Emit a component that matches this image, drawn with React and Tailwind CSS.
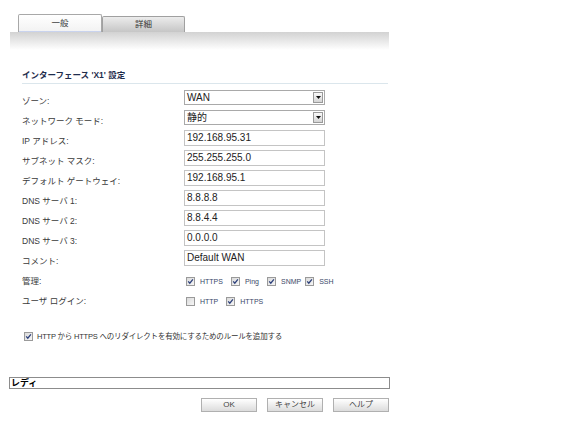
import React from 'react';

const FONT = "font-['Liberation_Sans','Noto_Sans_CJK_JP',sans-serif]";

const Check = ({ checked }) => (
  <svg width="9" height="9" viewBox="0 0 9 9" className="shrink-0">
    <defs>
      <linearGradient id="cbg" x1="0" y1="0" x2="1" y2="1">
        <stop offset="0" stopColor="#d8d8d8" />
        <stop offset="1" stopColor="#f8f8f8" />
      </linearGradient>
    </defs>
    <rect x="0.5" y="0.5" width="8" height="8" fill="url(#cbg)" stroke="#9a9a9a" />
    {checked && <path d="M2.2 4.4 L3.8 6.2 L6.9 2.4" fill="none" stroke="#2c3f7a" strokeWidth="1.3" />}
  </svg>
);

const SelectBox = ({ value }) => (
  <div className="w-[141px] h-[15px] border border-[#a9a9a9] bg-white flex items-center justify-between">
    <span className="pl-[2px] text-[10px] leading-none text-[#222]">{value}</span>
    <div className="w-[10px] h-[11px] mr-[1px] border border-[#9a9a9a] bg-gradient-to-b from-[#fafafa] to-[#d4d4d4] flex items-center justify-center">
      <svg width="5" height="3" viewBox="0 0 5 3"><path d="M0 0 H5 L2.5 3 Z" fill="#111" /></svg>
    </div>
  </div>
);

const TextBox = ({ value }) => (
  <div className="w-[141px] h-[16px] border border-[#c4c4c4] bg-white flex items-center">
    <span className="pl-[2px] text-[10px] leading-none text-[#222]">{value}</span>
  </div>
);

const Opt = ({ checked, label, gap = 'mr-[8px]' }) => (
  <div className={`flex items-center ${gap}`}>
    <Check checked={checked} />
    <span className="ml-[5px] text-[7px] leading-none text-[#3a4868]">{label}</span>
  </div>
);

const Row = ({ label, children }) => (
  <div className="flex h-[20px]">
    <div className="w-[162px] pt-[5px] text-[8.5px] leading-[12px] text-[#3a3a3a]">{label}</div>
    <div>{children}</div>
  </div>
);

const Button = ({ children }) => (
  <div className="w-[56px] h-[14px] border border-[#b0b0b0] bg-gradient-to-b from-[#ffffff] to-[#dcdcdc] flex items-center justify-center text-[8px] text-[#444]">
    {children}
  </div>
);

export default function App() {
  return (
    <div className={`w-[576px] h-[445px] bg-white ${FONT} overflow-hidden`}>
      {/* Tabs */}
      <div className="flex pt-[14px] pl-[18px] items-end">
        <div className="w-[84px] h-[18px] border border-b-0 border-[#a8a8a8] rounded-t-[2px] bg-gradient-to-b from-white to-[#f2f2f2] flex items-center justify-center text-[8.5px] text-[#333] shadow-[inset_0_-1px_0_#c9d3ee]">
          一般
        </div>
        <div className="w-[83px] h-[16px] border border-b-0 border-[#a0a0a0] rounded-t-[2px] bg-gradient-to-b from-[#ececec] to-[#c6c6c6] flex items-center justify-center text-[8.5px] text-[#333]">
          詳細
        </div>
      </div>
      <div className="ml-[10px] w-[379px] h-[18px] bg-gradient-to-b from-[#d2d2d2] to-white" />

      {/* Section heading */}
      <div className="ml-[22px] mt-[20px] w-[366px] border-b border-[#dbe6ec] pb-[2px]">
        <div className="text-[8.5px] leading-[11px] font-bold text-[#1f2d4d]">インターフェース 'X1' 設定</div>
      </div>

      {/* Form */}
      <div className="ml-[22px] mt-[6px]">
        <Row label="ゾーン:"><SelectBox value="WAN" /></Row>
        <Row label="ネットワーク モード:"><SelectBox value="静的" /></Row>
        <Row label="IP アドレス:"><TextBox value="192.168.95.31" /></Row>
        <Row label="サブネット マスク:"><TextBox value="255.255.255.0" /></Row>
        <Row label="デフォルト ゲートウェイ:"><TextBox value="192.168.95.1" /></Row>
        <Row label="DNS サーバ 1:"><TextBox value="8.8.8.8" /></Row>
        <Row label="DNS サーバ 2:"><TextBox value="8.8.4.4" /></Row>
        <Row label="DNS サーバ 3:"><TextBox value="0.0.0.0" /></Row>
        <Row label="コメント:"><TextBox value="Default WAN" /></Row>
        <Row label="管理:">
          <div className="flex items-center h-[20px] pl-[2px] pt-[2px]">
            <Opt checked label="HTTPS" />
            <Opt checked label="Ping" />
            <Opt checked label="SNMP" gap="mr-[4px]" />
            <Opt checked label="SSH" />
          </div>
        </Row>
        <Row label="ユーザ ログイン:">
          <div className="flex items-center h-[20px] pl-[2px] pt-[2px]">
            <Opt label="HTTP" />
            <Opt checked label="HTTPS" />
          </div>
        </Row>
      </div>

      {/* Redirect rule */}
      <div className="ml-[24px] mt-[22px] flex items-center">
        <Check checked />
        <span className="ml-[4px] text-[7.5px] leading-none text-[#333] tracking-[-0.2px]">HTTP から HTTPS へのリダイレクトを有効にするためのルールを追加する</span>
      </div>

      {/* Status bar */}
      <div className="ml-[9px] mt-[36px] w-[381px] h-[12px] border border-[#8c8c8c] flex items-center">
        <span className="pl-[1px] text-[9px] leading-none font-bold text-black">レディ</span>
      </div>

      {/* Buttons */}
      <div className="w-[389px] mt-[9px] flex justify-end gap-[10px]">
        <Button>OK</Button>
        <Button>キャンセル</Button>
        <Button>ヘルプ</Button>
      </div>
    </div>
  );
}
